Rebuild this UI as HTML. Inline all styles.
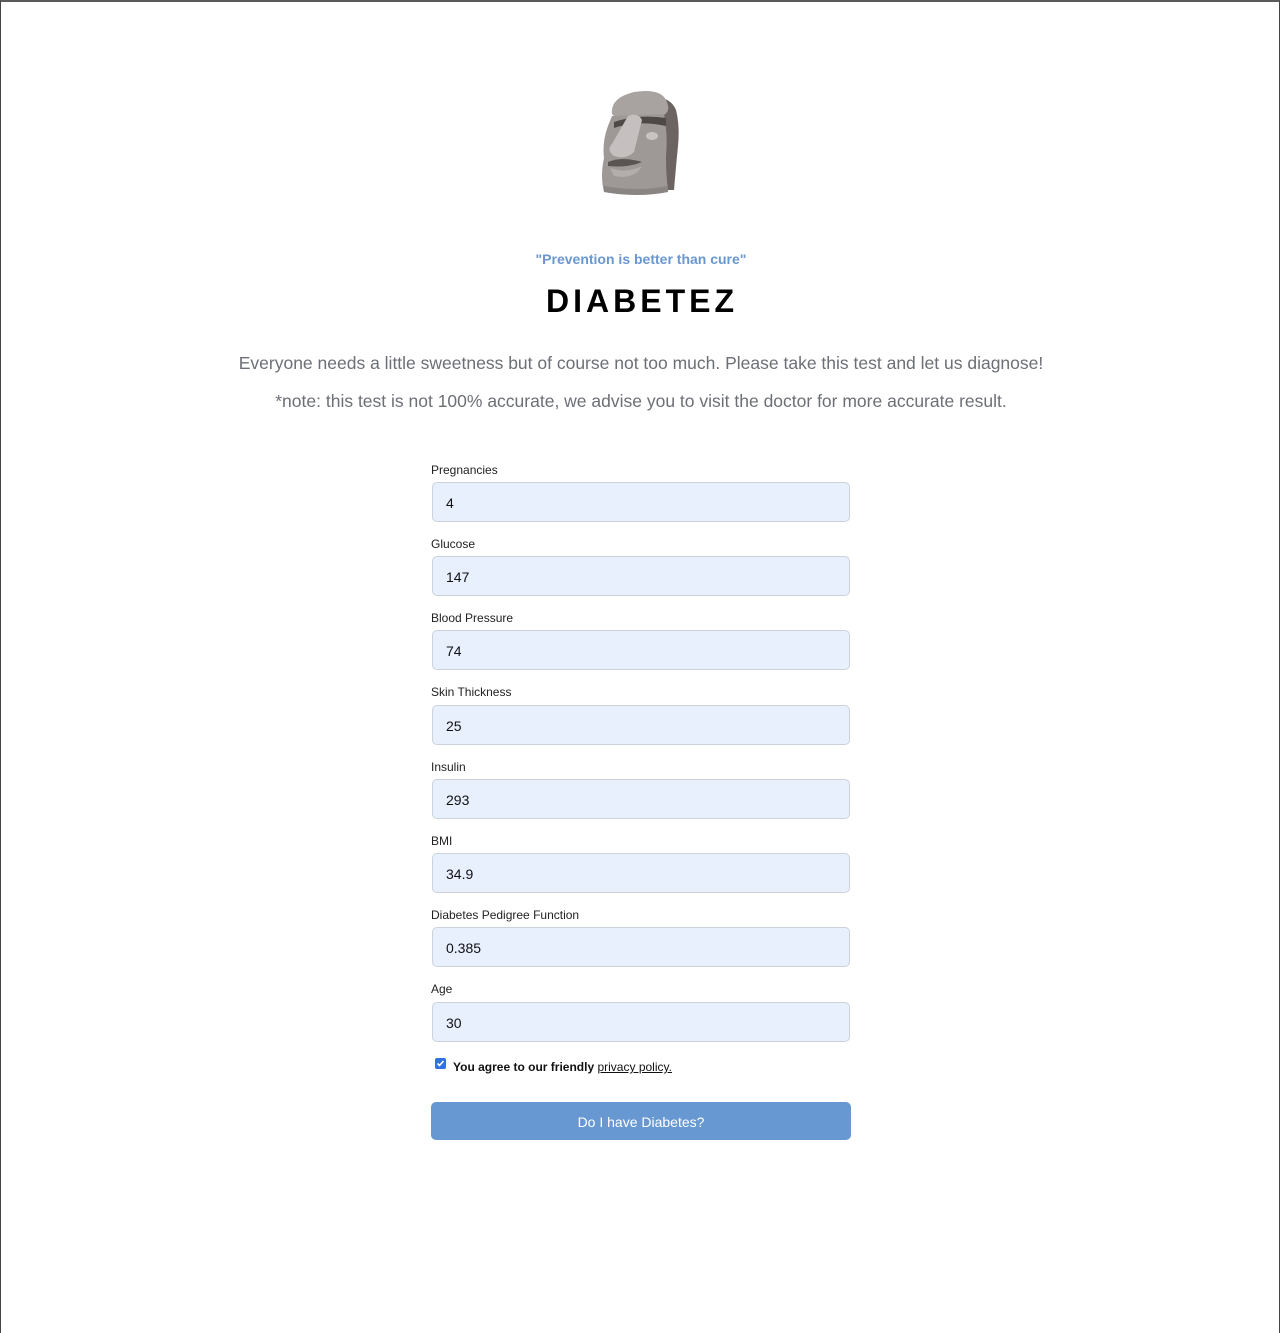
<!DOCTYPE html>
<html><head><meta charset="utf-8">
<style>
html,body{margin:0;padding:0;background:#fff;}
body{width:1280px;height:1333px;position:relative;font-family:"Liberation Sans",Arial,sans-serif;overflow:hidden;}
.frame{position:absolute;left:0;top:0;width:1280px;height:1333px;border-top:2px solid #5a5a5a;border-left:1px solid #444;border-right:1px solid #444;box-sizing:border-box;}
.quote{position:absolute;top:251px;left:0;width:1282px;text-align:center;color:#6a97cd;font-weight:bold;font-size:14px;}
.title{position:absolute;top:283px;left:0;width:1284px;text-align:center;font-weight:bold;font-size:32px;letter-spacing:4px;color:#000;}
.p{position:absolute;left:0;width:1282px;text-align:center;color:#6c6f75;font-size:17.5px;}
.lbl{position:absolute;left:431px;font-size:12px;color:#222;}
.inp{position:absolute;left:432px;width:418px;height:40px;box-sizing:border-box;background:#e8f0fe;border:1px solid #ccd2dc;border-radius:5px;font-size:14px;color:#111;padding:12px 0 0 13px;}
.chk{position:absolute;left:435px;top:1058px;width:11px;height:11px;background:#2f73e0;border-radius:2px;}
.agree{position:absolute;left:453px;top:1060px;font-size:12px;font-weight:bold;color:#111;}
.agree span{font-weight:normal;text-decoration:underline;}
.btn{position:absolute;left:431px;top:1102px;width:420px;height:38px;background:#6898d1;border-radius:5px;color:#fff;font-size:14px;text-align:center;line-height:40px;}
</style></head><body>
<div class="frame"></div>
<svg style="position:absolute;left:598px;top:86px" width="84" height="112" viewBox="0 0 84 112">
<path d="M30 14 Q70 4 78 24 Q82 40 80 60 Q78 80 76 104 L40 104 Z" fill="#6b6463"/>
<path d="M14 28 Q12 12 36 6 Q62 2 68 14 Q74 26 64 30 L22 36 Z" fill="#a8a2a1"/>
<path d="M14 30 L66 28 Q70 50 68 70 Q68 90 70 104 Q40 112 6 106 Q2 90 6 72 Q4 56 10 40 Z" fill="#9e9897"/>
<path d="M16 36 Q40 28 68 32 L68 40 Q40 34 16 42 Z" fill="#4e4847"/>
<path d="M30 30 Q40 26 44 34 L36 66 Q28 74 16 70 Q8 64 14 58 Z" fill="#c5c0bf"/>
<path d="M10 76 Q24 70 44 76 Q30 82 10 80 Z" fill="#5a5453"/>
<path d="M12 82 Q28 88 44 80 Q36 94 16 90 Z" fill="#b3adac"/>
<path d="M6 100 Q40 106 70 100 L70 106 Q40 112 6 106 Z" fill="#8a8483"/>
<ellipse cx="54" cy="50" rx="6" ry="4" fill="#c8c3c2"/>
</svg>
<div class="quote">"Prevention is better than cure"</div>
<div class="title">DIABETEZ</div>
<div class="p" style="top:353px">Everyone needs a little sweetness but of course not too much. Please take this test and let us diagnose!</div>
<div class="p" style="top:391px">*note: this test is not 100% accurate, we advise you to visit the doctor for more accurate result.</div>

<div class="lbl" style="top:463px">Pregnancies</div><div class="inp" style="top:482px">4</div>
<div class="lbl" style="top:537px">Glucose</div><div class="inp" style="top:556px">147</div>
<div class="lbl" style="top:611px">Blood Pressure</div><div class="inp" style="top:630px">74</div>
<div class="lbl" style="top:685px">Skin Thickness</div><div class="inp" style="top:705px">25</div>
<div class="lbl" style="top:760px">Insulin</div><div class="inp" style="top:779px">293</div>
<div class="lbl" style="top:834px">BMI</div><div class="inp" style="top:853px">34.9</div>
<div class="lbl" style="top:908px">Diabetes Pedigree Function</div><div class="inp" style="top:927px">0.385</div>
<div class="lbl" style="top:982px">Age</div><div class="inp" style="top:1002px">30</div>

<div class="chk"><svg width="11" height="11" viewBox="0 0 11 11" style="display:block"><path d="M2.5 5.5 L4.5 7.5 L8.5 3" stroke="#fff" stroke-width="1.6" fill="none"/></svg></div>
<div class="agree">You agree to our friendly <span>privacy policy.</span></div>
<div class="btn">Do I have Diabetes?</div>
</body></html>
